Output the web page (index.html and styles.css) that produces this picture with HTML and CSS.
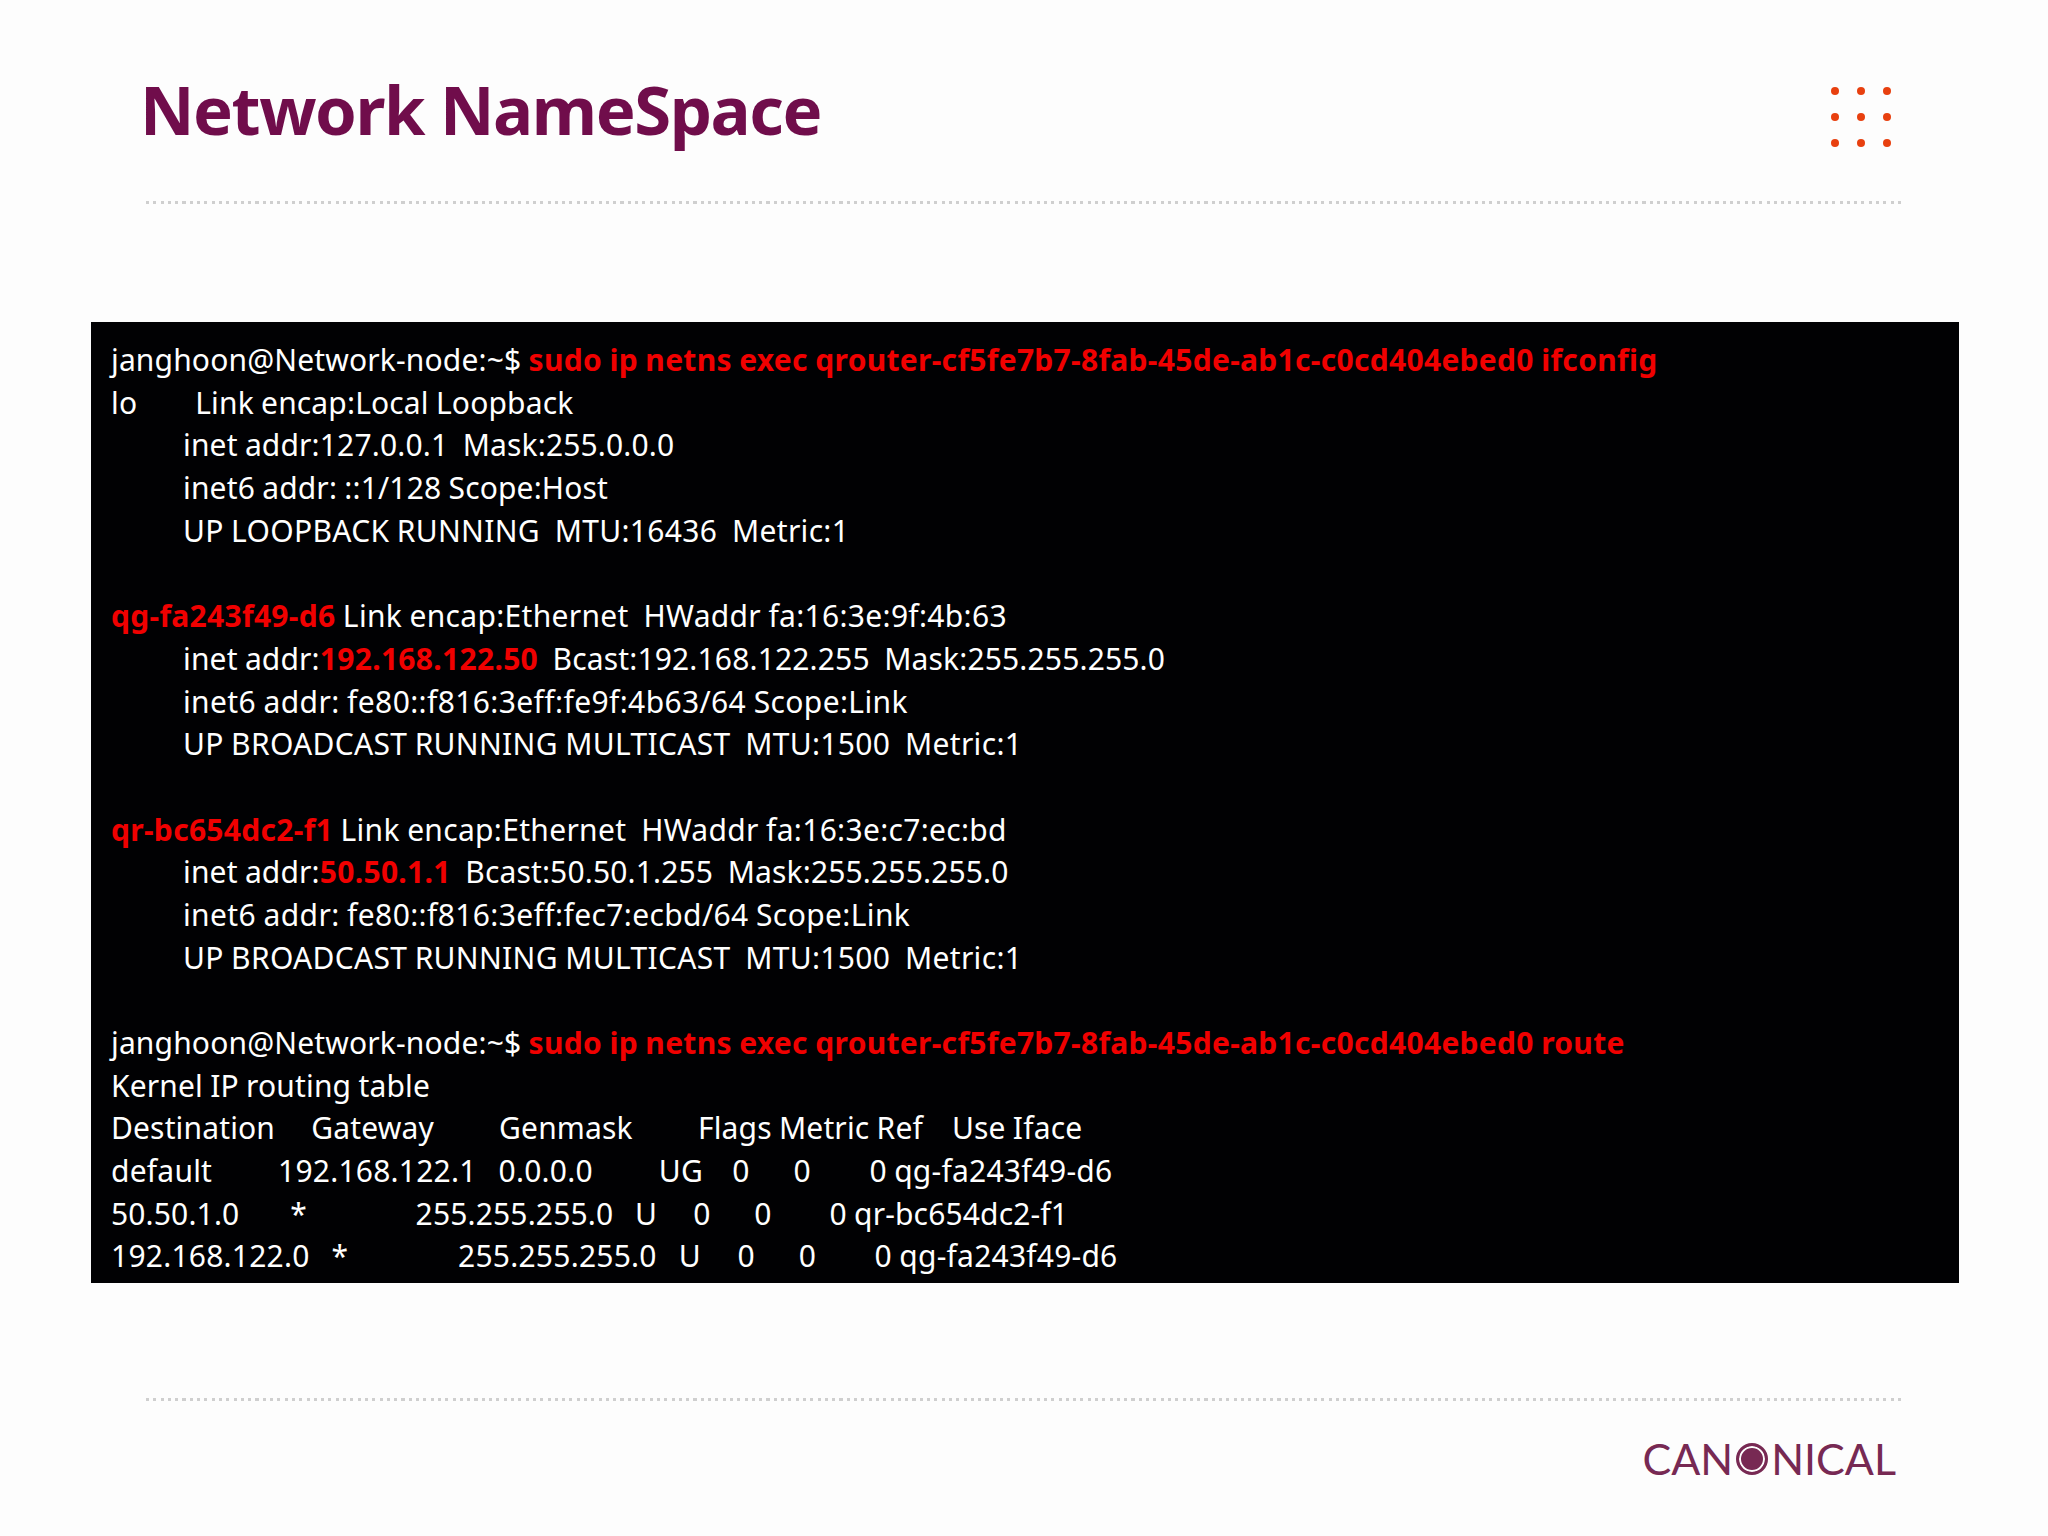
FILE: index.html
```html
<!DOCTYPE html>
<html lang="en">
<head>
<meta charset="utf-8">
<title>Network NameSpace</title>
<link rel="stylesheet" href="styles.css">
</head>
<body>
<div class="slide">
  <header class="head">
    <h1 class="title">Network NameSpace</h1>
    <div class="dots"><i></i><i></i><i></i><i></i><i></i><i></i><i></i><i></i><i></i></div>
  </header>
  <main class="term">
<div class="l">janghoon@Network-node:~$ <b>sudo ip netns exec qrouter-cf5fe7b7-8fab-45de-ab1c-c0cd404ebed0 ifconfig</b></div>
<div class="l">lo        Link encap:Local Loopback</div>
<div class="l in">inet addr:127.0.0.1  Mask:255.0.0.0</div>
<div class="l in">inet6 addr: ::1/128 Scope:Host</div>
<div class="l in s1">UP LOOPBACK RUNNING  MTU:16436  Metric:1</div>
<div class="l"> </div>
<div class="l s1"><b>qg-fa243f49-d6</b> Link encap:Ethernet  HWaddr fa:16:3e:9f:4b:63</div>
<div class="l in">inet addr:<b>192.168.122.50</b>  Bcast:192.168.122.255  Mask:255.255.255.0</div>
<div class="l in s2">inet6 addr: fe80::f816:3eff:fe9f:4b63/64 Scope:Link</div>
<div class="l in s1">UP BROADCAST RUNNING MULTICAST  MTU:1500  Metric:1</div>
<div class="l"> </div>
<div class="l s1"><b>qr-bc654dc2-f1</b> Link encap:Ethernet  HWaddr fa:16:3e:c7:ec:bd</div>
<div class="l in">inet addr:<b>50.50.1.1</b>  Bcast:50.50.1.255  Mask:255.255.255.0</div>
<div class="l in s2">inet6 addr: fe80::f816:3eff:fec7:ecbd/64 Scope:Link</div>
<div class="l in s1">UP BROADCAST RUNNING MULTICAST  MTU:1500  Metric:1</div>
<div class="l"> </div>
<div class="l">janghoon@Network-node:~$ <b>sudo ip netns exec qrouter-cf5fe7b7-8fab-45de-ab1c-c0cd404ebed0 route</b></div>
<div class="l">Kernel IP routing table</div>
<div class="l">Destination     Gateway         Genmask         Flags Metric Ref    Use Iface</div>
<div class="l s0">default         192.168.122.1   0.0.0.0         UG    0      0        0 qg-fa243f49-d6</div>
<div class="l">50.50.1.0       *               255.255.255.0   U     0      0        0 qr-bc654dc2-f1</div>
<div class="l s0">192.168.122.0   *               255.255.255.0   U     0      0        0 qg-fa243f49-d6</div>
  </main>
  <footer class="foot">
    <div class="logo"><span>CAN</span><span class="logo-o"></span><span>NICAL</span></div>
  </footer>
</div>
</body>
</html>
```
FILE: styles.css
```css
* { box-sizing: border-box; }
html, body { margin: 0; background: #fdfdfd; }
.slide { width: 2048px; height: 1536px; display: flex; flex-direction: column; overflow: hidden; }
.head {
  margin: 0 144px 0 146px; height: 204px; display: flex; justify-content: space-between; align-items: flex-start;
  background: repeating-linear-gradient(90deg, #cfcfcf 0 3px, transparent 3px 7.3px) left bottom / 100% 3px no-repeat;
}
.title { margin: 72px 0 0 -6px; font: 700 67px/74px "Noto Sans", sans-serif; color: #700d4b; letter-spacing: -1.45px; }
.dots { display: grid; grid-template-columns: repeat(3, 8px); gap: 18px; margin: 87px 13px 0 0; }
.dots i { width: 8px; height: 8px; border-radius: 50%; background: #e8400f; }
.term {
  margin: 118px 89px 0 91px; height: 961px; padding: 17px 0 0 20px; background: #010103; color: #fff;
  font: 400 30px/42.7px "Noto Sans", sans-serif; letter-spacing: 0.15px; word-spacing: -0.7px;
}
.l { white-space: pre; height: 42.7px; }
.l b { color: #f00000; font-weight: 700; letter-spacing: 0.3px; }
.in { padding-left: 72px; }
.s0 { letter-spacing: 0.22px; }
.s1 { letter-spacing: 0.31px; }
.s2 { letter-spacing: 0.38px; }
.foot {
  margin: 115px 144px 0 146px; flex: 1; display: flex; justify-content: flex-end; padding: 41px 8px 0 0;
  background: repeating-linear-gradient(90deg, #cfcfcf 0 3px, transparent 3px 7.3px) left top / 100% 3px no-repeat;
}
.logo { display: flex; align-items: center; height: 40px; font: 400 43px/40px Lato, sans-serif; color: #772953; }
.logo-o { width: 32px; height: 32px; border-radius: 50%; background: #772953; border: 3.5px solid #772953; box-shadow: inset 0 0 0 2px #fdfdfd; margin: 0 3px; }
```
